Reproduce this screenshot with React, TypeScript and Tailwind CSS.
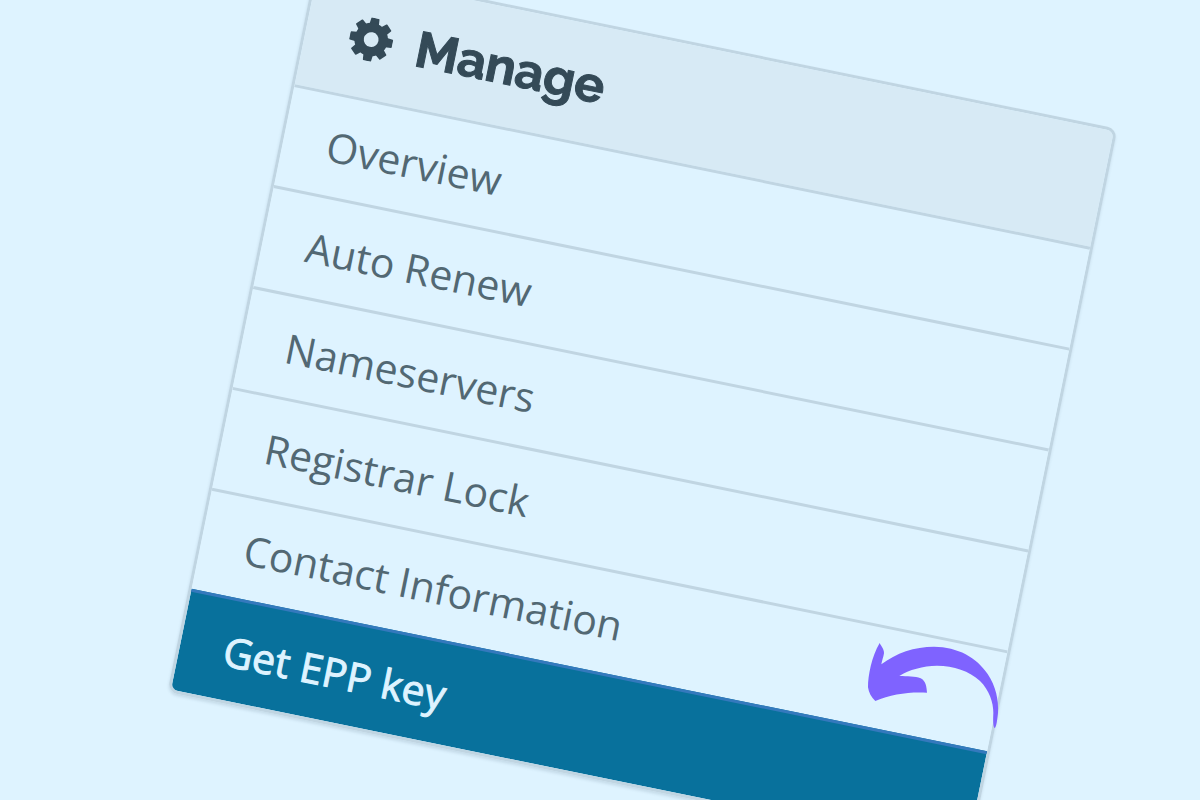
import clsx from 'clsx';

const items = [
  { label: 'Overview', href: '#overview' },
  { label: 'Auto Renew', href: '#auto-renew' },
  { label: 'Nameservers', href: '#nameservers' },
  { label: 'Registrar Lock', href: '#registrar-lock' },
  { label: 'Contact Information', href: '#contact-information' },
  { label: 'Get EPP key', href: '#epp-key', active: true },
];

const teeth = [0, 45, 90, 135, 180, 225, 270, 315];

function CogIcon() {
  return (
    <svg viewBox="-22 -22 44 44" className="size-11 shrink-0" fill="currentColor" aria-hidden="true">
      {teeth.map((angle) => (
        <path key={angle} d="M-5 -13 L-4.2 -21 Q-4.1 -21.7 -3.4 -21.7 L3.4 -21.7 Q4.1 -21.7 4.2 -21 L5 -13 Z" transform={`rotate(${angle})`} />
      ))}
      <path fillRule="evenodd" d="M0 -16.8 A16.8 16.8 0 1 1 0 16.8 A16.8 16.8 0 1 1 0 -16.8 Z M0 -7.4 A7.4 7.4 0 1 0 0 7.4 A7.4 7.4 0 1 0 0 -7.4 Z" />
    </svg>
  );
}

function PointerArrow() {
  return (
    <svg
      viewBox="81 66 399 264"
      className="absolute left-[867px] top-[642px] h-[88px] w-[133px] text-[#7f63ff]"
      fill="currentColor"
      aria-hidden="true"
    >
      <path d="M119 69 C123 78 133 88 132 100 C130 112 126 122 124 133 C168 99 224 80 282 80 C354 81 410 112 443 162 C468 200 476 240 474 278 C472 298 469 322 464 324 C459 322 459 298 460 279 C460 247 448 211 420 183 C388 153 341 137 291 137 C249 138 207 149 178 168 C202 169 225 168 242 175 C257 182 260 200 261 218 C209 215 153 222 106 243 C94 232 86 218 84 202 C84 166 95 110 119 69 Z" />
    </svg>
  );
}

export default function App() {
  return (
    <main className="relative h-screen overflow-hidden bg-[#def3ff] pl-[316px] font-['Open_Sans',sans-serif]">
      <nav
        aria-labelledby="manage-title"
        className="-mt-[35px] w-[92.5%] origin-top-left rotate-[11.55deg] overflow-hidden rounded-[10px] border-3 border-[#c0d5e2] shadow-[0_2px_3px_rgba(60,90,110,0.15)]"
      >
        <header className="flex h-[118px] items-center gap-6 bg-[#d7eaf5] pl-11 text-[#344a57]">
          <CogIcon />
          <h1
            id="manage-title"
            className="font-[Raleway,Lato,sans-serif] text-[50px] leading-none font-bold [-webkit-text-stroke:1px_#344a57]"
          >
            Manage
          </h1>
        </header>
        <ul>
          {items.map((item) => (
            <li key={item.label}>
              <a
                href={item.href}
                aria-current={item.active ? 'page' : undefined}
                className={clsx(
                  'flex h-[103px] items-center border-t-3 pl-11 text-[41px] leading-none font-medium',
                  item.active
                    ? 'border-[#3479bd] bg-[#08719c] text-[#def3ff] [-webkit-text-stroke:1px_#def3ff]'
                    : 'border-[#c0d5e2] bg-[#def3ff] text-[#526873]',
                )}
              >
                {item.label}
              </a>
            </li>
          ))}
        </ul>
      </nav>
      <PointerArrow />
    </main>
  );
}
